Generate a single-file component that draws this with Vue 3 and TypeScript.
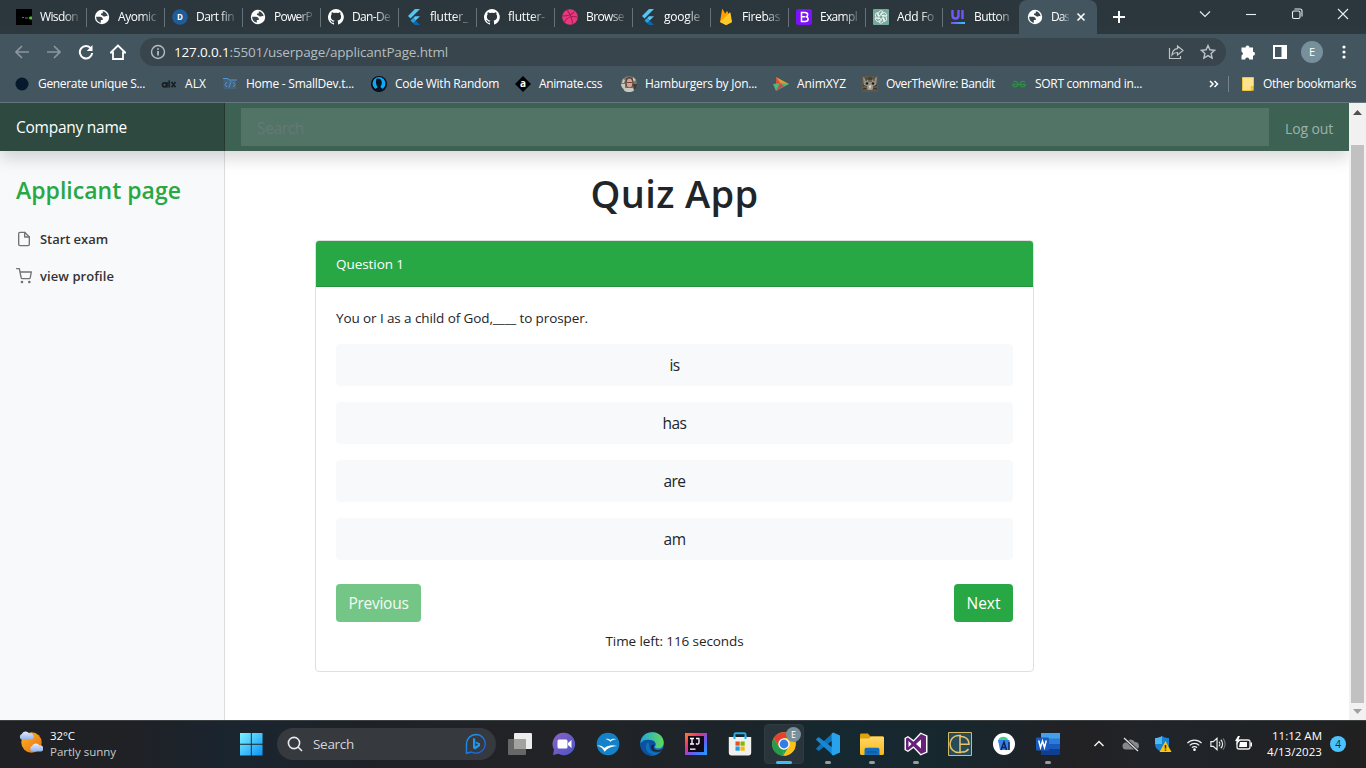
<script setup lang="ts">
interface Tab { icon: string; title: string; cell: number; w: number }
interface Bookmark { icon: string; title: string; cell: number; w: number }
interface TaskApp { icon: string; running?: boolean; active?: boolean }

const tabs: Tab[] = [
  { icon: 'term', title: 'Wisdon', cell: 78, w: 38 },
  { icon: 'globe', title: 'Ayomic', cell: 78, w: 38 },
  { icon: 'dart', title: 'Dart fin', cell: 78, w: 38 },
  { icon: 'globe', title: 'PowerP', cell: 78, w: 38 },
  { icon: 'github', title: 'Dan-De', cell: 78, w: 38 },
  { icon: 'flutter', title: 'flutter_', cell: 78, w: 38 },
  { icon: 'github', title: 'flutter-', cell: 78, w: 37 },
  { icon: 'dribbble', title: 'Browse', cell: 78, w: 38 },
  { icon: 'flutter', title: 'google', cell: 78, w: 36 },
  { icon: 'firebase', title: 'Firebas', cell: 78, w: 38 },
  { icon: 'bootstrap', title: 'Exampl', cell: 77, w: 37 },
  { icon: 'gpt', title: 'Add Fo', cell: 77, w: 37 },
  { icon: 'ui', title: 'Button', cell: 77, w: 35 },
]

const bookmarks: Bookmark[] = [
  { icon: 'dot', title: 'Generate unique S...', cell: 147, w: 107 },
  { icon: 'alx', title: 'ALX', cell: 61, w: 21 },
  { icon: 'smalldev', title: 'Home - SmallDev.t...', cell: 149, w: 108 },
  { icon: 'random', title: 'Code With Random', cell: 144, w: 104 },
  { icon: 'animate', title: 'Animate.css', cell: 106, w: 63 },
  { icon: 'person', title: 'Hamburgers by Jon...', cell: 152, w: 112 },
  { icon: 'xyz', title: 'AnimXYZ', cell: 89, w: 49 },
  { icon: 'cat', title: 'OverTheWire: Bandit', cell: 149, w: 109 },
  { icon: 'gfg', title: 'SORT command in...', cell: 140, w: 107 },
]

const options: { text: string; w: number }[] = [
  { text: 'is', w: 10 },
  { text: 'has', w: 24 },
  { text: 'are', w: 22 },
  { text: 'am', w: 22 },
]

const apps: TaskApp[] = [
  { icon: 'taskview' }, { icon: 'meet' }, { icon: 'birds' }, { icon: 'edge' },
  { icon: 'intellij' }, { icon: 'store' }, { icon: 'chrome', active: true },
  { icon: 'vscode', running: true }, { icon: 'folder', running: true },
  { icon: 'vs', running: true }, { icon: 'ce' }, { icon: 'studio' },
  { icon: 'word', running: true },
]

// Spreads a label's letters so that it takes the given width in pixels.
const vFit = {
  mounted(el: HTMLElement, binding: { value: number }) {
    el.style.letterSpacing = '0px'
    const count = (el.textContent ?? '').length
    const natural = el.getBoundingClientRect().width
    if (count > 0) el.style.letterSpacing = `${((binding.value - natural) / count).toFixed(3)}px`
  },
}
</script>

<template>
  <div class="screen">
    <svg class="sprite" width="0" height="0" aria-hidden="true">
      <defs>
        <linearGradient id="gWin" x1="0" y1="0" x2="1" y2="1"><stop offset="0" stop-color="#7df3ff" /><stop offset="1" stop-color="#0a93f5" /></linearGradient>
        <linearGradient id="gSun" x1="0" y1="0" x2="1" y2="1"><stop offset="0" stop-color="#fbb829" /><stop offset="1" stop-color="#ea6a10" /></linearGradient>
        <linearGradient id="gCloud" x1="0" y1="0" x2="0" y2="1"><stop offset="0" stop-color="#e4edfd" /><stop offset="1" stop-color="#93b3ee" /></linearGradient>
        <linearGradient id="gUi" x1="0" y1="0" x2="1" y2="0"><stop offset="0" stop-color="#7b4dff" /><stop offset="1" stop-color="#2fc8f5" /></linearGradient>
        <linearGradient id="gMeet" x1="0" y1="0" x2="1" y2="1"><stop offset="0" stop-color="#8b62c4" /><stop offset="1" stop-color="#4b55c8" /></linearGradient>
        <linearGradient id="gEdge" x1="0" y1="0" x2="1" y2="0"><stop offset="0" stop-color="#1fa5e0" /><stop offset="1" stop-color="#63d957" /></linearGradient>
        <linearGradient id="gIj" x1="0" y1="0" x2="1" y2="1"><stop offset="0" stop-color="#fd8224" /><stop offset=".35" stop-color="#ee2f75" /><stop offset=".6" stop-color="#6a5af0" /><stop offset="1" stop-color="#18a0ff" /></linearGradient>
        <linearGradient id="gFold" x1="0" y1="0" x2="0" y2="1"><stop offset="0" stop-color="#ffd768" /><stop offset="1" stop-color="#f9b916" /></linearGradient>
        <linearGradient id="gBing" x1="0" y1="0" x2="1" y2="1"><stop offset="0" stop-color="#1b9df0" /><stop offset="1" stop-color="#2157d6" /></linearGradient>
      </defs>
      <symbol id="term" viewBox="0 0 16 16"><path fill="#000" d="M0 0h16v16H0z" /><path d="M6 8.500h2M9 9h3" stroke="#6a6f6a" /><path d="M12.500 9l1.500-1.500h2v3h-2z" fill="#4cc32a" /></symbol>
      <symbol id="globe" viewBox="0 0 16 16"><circle cx="8" cy="8" r="7.200" fill="#fff" /><path d="M2.200 7.800H6c1.600 0 2.800 1 2.800 2.500v.6H6.800v2.800C4 13.200 2 10.800 2.200 7.800zM8.800 2.300c2.500.4 4.600 2.500 4.900 5.200-.7-.6-1.400-.6-2.100-.2-.9.500-1.900.3-2.600-.4-.6-.6-1.200-.9-2-.9V4.500h1c.500 0 .8-.3.800-.8z" fill="#39464e" /></symbol>
      <symbol id="dart" viewBox="0 0 16 16"><circle cx="8" cy="8" r="7.800" fill="#1f5c99" /><text x="8" y="11" text-anchor="middle" font-size="8" font-weight="700" fill="#fff">D</text></symbol>
      <symbol id="github" viewBox="0 0 16 16"><path fill="#fff" d="M8 0a8 8 0 0 0-2.500 15.600c.4.100.500-.2.500-.4v-1.500c-2.200.5-2.700-1-2.700-1-.4-.9-.9-1.200-.9-1.200-.7-.5.100-.5.100-.5.800.1 1.200.8 1.200.8.7 1.200 1.900.9 2.300.7.100-.5.300-.9.500-1.100-1.800-.2-3.600-.9-3.600-4 0-.9.300-1.600.8-2.100-.1-.2-.4-1 .1-2.100 0 0 .7-.2 2.200.8a7.600 7.600 0 0 1 4 0c1.500-1 2.200-.8 2.200-.8.4 1.100.2 1.900.1 2.100.5.600.8 1.300.8 2.100 0 3.100-1.900 3.800-3.700 4 .3.200.6.700.6 1.500v2.200c0 .200.100.500.600.4A8 8 0 0 0 8 0z" /></symbol>
      <symbol id="flutter" viewBox="0 0 16 16"><path d="M9 0h5L4.500 9.500 2 7z" fill="#55c5f8" /><path d="M9 7.300h5L9.600 11.600 7.100 9.200z" fill="#55c5f8" /><path d="M4.600 11.600 7.100 9.100 14 16H9z" fill="#0b68ae" /><path d="M4.600 11.600 7.100 9.100l2.500 2.500-2.500 2.500z" fill="#29a4df" /></symbol>
      <symbol id="dribbble" viewBox="0 0 16 16"><circle cx="8" cy="8" r="7.800" fill="#e8397f" /><path d="M5.200 1.200C8 4.500 9.800 9 10.700 14.700M.5 7c5 0 9.500-.8 12-4.500M2.500 13c2-4.500 7-6.500 13-4.700" fill="none" stroke="#a51c50" stroke-width="1.100" /></symbol>
      <symbol id="firebase" viewBox="0 0 16 16"><path d="M2 13 4 .8c.1-.5.700-.6 1-.1l2.200 4L8.500 2.500c.2-.5.800-.5 1 0L14 13l-5.500 3z" fill="#ffa000" /><path d="m2 13 9.500-9.300c.4-.3.900-.1 1 .3L14 13l-5.300 2.800a2 2 0 0 1-1.500 0z" fill="#ffca28" /></symbol>
      <symbol id="bootstrap" viewBox="0 0 16 16"><rect width="16" height="16" rx="2.500" fill="#7b12f8" /><path d="M5.500 3.500v9h3.600c2 0 3-1 3-2.500 0-1.200-.8-2-1.900-2.200 1-.3 1.500-1 1.500-2 0-1.400-1-2.300-2.800-2.300zM5.500 7.800h4" fill="none" stroke="#fff" stroke-width="1.500" /></symbol>
      <symbol id="gpt" viewBox="0 0 16 16"><rect width="16" height="16" rx="1" fill="#75a99c" /><g fill="none" stroke="#fff" stroke-width=".8"><path id="petal" d="M8 5.700 5.500 7.200V4.300a2.600 2.600 0 0 1 4.700-1.400L7.500 4.500" /><use href="#petal" transform="rotate(60 8 8)" /><use href="#petal" transform="rotate(120 8 8)" /><use href="#petal" transform="rotate(180 8 8)" /><use href="#petal" transform="rotate(240 8 8)" /><use href="#petal" transform="rotate(300 8 8)" /></g></symbol>
      <symbol id="ui" viewBox="0 0 16 16"><path d="M2.500 1v5.500c0 4 6 4 6 0V1M12.500 1v9" fill="none" stroke="#7357f5" stroke-width="2.400" /><path d="M1 13h14v2H1z" fill="url(#gUi)" /></symbol>
      <symbol id="dot" viewBox="0 0 16 16"><circle cx="8" cy="8" r="6.500" fill="#06192d" /></symbol>
      <symbol id="alx" viewBox="0 0 16 16"><g fill="none" stroke="#182022" stroke-width="1.700"><circle cx="3.500" cy="8.800" r="2" /><path d="M6 6v5.500M8.200 4.500v7M10.500 6l4 5.300M14.500 6l-4 5.300" /></g></symbol>
      <symbol id="smalldev" viewBox="0 0 16 16"><path d="M1.500 2.500h5l1 1.500h6.500v9H1.500z" fill="#496a88" opacity=".6" /><path d="M1 2.500h5l1 1.500h8M5 6 3 8.500 5 11M11 6l2 2.500-2 2.500M9 5.500l-2 6" fill="none" stroke="#5393d5" /></symbol>
      <symbol id="random" viewBox="0 0 16 16"><circle cx="8" cy="8" r="8" fill="#050b12" /><circle cx="8" cy="7.500" r="6.500" fill="#0cabf7" /><path d="M5.500 2.800C8 1.600 11 3 10.800 6.800c0 2-.8 3-1.500 4l3 3c-3 2-6.500 2-9 0l3.500-2.500C5 9 4.300 6 5.500 2.800z" fill="#07121e" /></symbol>
      <symbol id="animate" viewBox="0 0 16 16"><path d="m8 0 8 8-8 8-8-8z" fill="#000" /><text x="8" y="11.300" text-anchor="middle" font-size="10" font-weight="700" fill="#fff">a</text></symbol>
      <symbol id="person" viewBox="0 0 16 16"><circle cx="8" cy="8" r="8" fill="#74766e" /><path d="M0 8h4v6C1 12 0 10 0 8zM12 1l3 3-3 2zM2 3l2 1-1 3H1z" fill="#c4c8bd" /><path d="M12 8h4c0 3-1 5-3 6z" fill="#3c3d38" /><ellipse cx="8.500" cy="6.500" rx="4" ry="5.500" fill="#543830" /><ellipse cx="8.500" cy="7" rx="2.900" ry="4.500" fill="#d2a48f" /><path d="M4 12h8l1 2.500c-3 2-7 2-10 0z" fill="#c9c7c1" /><path d="M5.500 6.500h6" stroke="#70493d" /></symbol>
      <symbol id="xyz" viewBox="0 0 16 16"><path d="m3 1 13 7-8 2z" fill="#e29a33" /><path d="M3 1v10l5-3z" fill="#d6503f" /><path d="m0 8 8-1 8 1L3 15z" fill="#4eb779" /><path d="m3 15 4-8 4 3z" fill="#c04f54" /></symbol>
      <symbol id="cat" viewBox="0 0 16 16"><path d="M0 0h16v16H0z" fill="#5b574b" /><path d="m1 1 4 3h5l5-3-1 8-4 5H6L2 10z" fill="#969180" /><path d="M4 2v3M7 1v5M9 1v5M12 2v3M1 9l4 2M15 9l-4 2M1 13l4-1M15 13l-4-1" stroke="#24231e" stroke-width=".8" /><circle cx="5" cy="7.500" r="1.300" fill="#1b1d16" /><circle cx="11" cy="7.500" r="1.300" fill="#1b1d16" /><path d="m6.500 9.500 1.500 4 1.500-4z" fill="#e0d7c8" /></symbol>
      <symbol id="gfg" viewBox="0 0 16 16"><path d="M2 6c2-1.500 5-.3 5 2.400 0 3.200-5.300 3-5.300 0H14.300c0 3-5.300 3.200-5.300 0C9 5.700 12 4.500 14 6" fill="none" stroke="#2f8d46" stroke-width="1.300" /></symbol>
      <symbol id="taskview" viewBox="0 0 24 24"><rect x="6" y="1" width="18" height="16" rx="1" fill="#ececec" /><rect y="7" width="18" height="16" rx="1" fill="#6c6c6b" opacity=".95" /><path d="M6 7h12v10H6z" fill="#a2a2a1" /></symbol>
      <symbol id="meet" viewBox="0 0 24 24"><path d="M12 .8a11.200 11.200 0 1 1-5.500 21L1 23l1-5.500A11.200 11.200 0 0 1 12 .8z" fill="url(#gMeet)" /><rect x="5.500" y="7.500" width="10" height="9" rx="1.500" fill="#fff" /><path d="m16 11 3.500-3v8L16 13z" fill="#fff" /></symbol>
      <symbol id="birds" viewBox="0 0 24 24"><circle cx="12" cy="12" r="11.300" fill="#1382c9" /><path d="M9.500 7c2-.6 3.500-.2 4.800 1 1.700-1.300 3.700-1.400 5.700-.8-2.200.2-4 1-5.700 2.600C13 8.200 11.500 7.500 9.500 7zM1 13.800c3.300-.6 5.600.3 7.300 2.200 3.700-2.800 8.200-3.500 12.700-2-5 .2-9.500 2-12.500 5.800C7 16.500 5 14.500 1 13.800z" fill="#fff" /></symbol>
      <symbol id="edge" viewBox="0 0 24 24"><circle cx="12" cy="12" r="11.700" fill="#1170bd" /><path d="M.4 11C1 4 6 .2 12.500.3 20 .5 24 6 23.700 11c-.2 4-3 5.500-6 5.300-3-.1-3-1.500-2.200-2.800 1-2-1-5.500-5-5.500C5.500 8 1 11 .4 11z" fill="url(#gEdge)" /><path d="M8 10c-5 5-1 13 7 13.200C10 25 1 22 .4 12 2 8 6 7 10 8c3 .3 5.500 2 5.500 4.500L14 15c-1 2 2 4 7 2.500L22 18c-3 4-10 3-12-1-1.200-2.500-.5-5-2-7z" fill="#0c51a1" /><path d="M14 12.500c1 1-1 2-.5 3.500 1 2.500 5 3 9 1l-.8 1.500c-3.500 2.500-9.700 1.500-10.700-2.500-.4-1.800 1-3.500 3-3.500z" fill="#202631" /></symbol>
      <symbol id="intellij" viewBox="0 0 24 24"><path d="M1 1h22v22H1z" fill="url(#gIj)" /><path d="M4 4h16v16H4z" fill="#130817" /><path d="M6 6.500h4M6 12h4M8 6.500V12M12 6.500h3.500M15 6.500v4c0 2-2 2-3 1" fill="none" stroke="#fff" stroke-width="1.300" /><path d="M6 16.500h5.500v1.300H6z" fill="#fff" /></symbol>
      <symbol id="store" viewBox="0 0 24 24"><path d="M6.500 7V2.500c0-.8.500-1.200 1.200-1.200h8.600c.7 0 1.200.4 1.200 1.200V7" fill="none" stroke="#25a9e8" stroke-width="2" /><path d="M.8 5h22.400v15.500A3 3 0 0 1 20 23.500H4a3 3 0 0 1-3.200-3z" fill="#f0f0ef" /><path d="M6.500 4v3M17.500 4v3" stroke="#25a9e8" stroke-width="2" /><path d="M7.500 9.500h4.200v4.200H7.500z" fill="#e94f20" /><path d="M12.500 9.500h4.200v4.200h-4.200z" fill="#7cb908" /><path d="M7.500 14.500h4.200v4.200H7.500z" fill="#1c9ee8" /><path d="M12.500 14.500h4.200v4.200h-4.200z" fill="#fcb805" /></symbol>
      <symbol id="chrome" viewBox="0 0 24 24"><circle cx="12" cy="12" r="11.800" fill="#fbc116" /><path d="M1.800 6A11.800 11.800 0 0 1 22.200 6H12l-5 9z" fill="#e8402f" /><path d="M1.800 6 7 15l5 3-1 6A11.800 11.800 0 0 1 1.800 6z" fill="#269b4d" /><path d="m11 23.800 6.200-9.800L12 12l-5 3 5 3z" fill="#269b4d" /><path d="M12 23.800 17.200 15 19 9l4 0A11.800 11.800 0 0 1 12 23.800z" fill="#fbc116" /><circle cx="12" cy="12" r="5.700" fill="#fff" /><circle cx="12" cy="12" r="4.400" fill="#347de9" /></symbol>
      <symbol id="vscode" viewBox="0 0 24 24"><path d="m17.300.4-14 12.800L.5 16a1 1 0 0 0 0 1.200L2 18.500c.4.300.9.300 1.300 0L19 6.500z" fill="#0d73ba" /><path d="M.5 6.800 2 5.500c.4-.3.900-.3 1.300 0L19 17.500l-1.700 6.100-14-12.800L.5 8.200a1 1 0 0 1 0-1.400z" fill="#1787d4" /><path d="M17.300.4 24 3.500v17l-6.700 3.100-1.600-1V1.400z" fill="#27a3ed" /></symbol>
      <symbol id="folder" viewBox="0 0 24 24"><path d="M0 3c0-1 .5-1.500 1.500-1.500H8l2.500 3H23l1 1V21H0z" fill="#dfa008" /><path d="M0 6.500h9l2-2h12l1 1V22l-1 1H1l-1-1z" fill="url(#gFold)" /><path d="M4.500 23v-5c0-1.500.8-2.200 2-2.200h11c1.200 0 2 .7 2 2.200v5z" fill="#0f6fbe" /><path d="M7 20h10" stroke="#1659a0" stroke-width="1.500" /></symbol>
      <symbol id="vs" viewBox="0 0 24 24"><path d="m16.500.5 7 3v17l-7 3-7-7.500-5.500 4L.5 18V6L4 4l5.500 4z" fill="#fff" /><path d="m17 2 5 2.300v15.400L17 22 9.500 14.200 4 18.500l-2-1v-11l2-1 5.500 4.300z" fill="#68217a" /><path d="M4.500 9v6l3-3zM17 7.500v9L12 12z" fill="#fff" /></symbol>
      <symbol id="ce" viewBox="0 0 24 24"><path d="M.5.5h23v23H.5z" fill="#284c57" stroke="#d6b968" /><path d="M13 3.500h-2.500a8.500 8.500 0 0 0 0 17H13M12 3.500v17M12 4.500c5-.5 9 2.500 9 7.800h-9M13 20c3.500.3 6-.8 7.500-3" fill="none" stroke="#e8c36c" stroke-width="1.500" /></symbol>
      <symbol id="studio" viewBox="0 0 24 24"><circle cx="12" cy="12" r="11" fill="#fff" /><path d="M6.500 7.500c1-3.500 8-4 9.500 0l1.500 3h-11z" fill="#3bd287" /><path d="M6 8h11.500v10H8z" fill="#3b7fef" /><path d="m9 18 3-8 2.500 8M10 15.500h3.500M17 10v8" fill="none" stroke="#0a2346" stroke-width="1.400" /></symbol>
      <symbol id="word" viewBox="0 0 24 24"><path d="M5 1h19v6H5z" fill="#43a0ec" /><path d="M5 6.500h19V12H5z" fill="#2c7bd4" /><path d="M5 12h19v5.500H5z" fill="#195abe" /><path d="M5 17.500h19V22l-1 1H5z" fill="#103f92" /><rect y="5.500" width="13" height="13" rx="1" fill="#185abd" /><path d="m2.700 8.500 1.800 7 2-6.500 2 6.500 1.800-7" fill="none" stroke="#fff" stroke-width="1.500" /></symbol>
    </svg>

    <header class="browser">
      <div class="tabstrip">
        <div v-for="(tab, i) in tabs" :key="i" class="tab" :class="{ last: i === tabs.length - 1 }" :style="{ width: tab.cell + 'px' }">
          <svg class="fav"><use :href="'#' + tab.icon" /></svg>
          <div class="fade"><span v-fit="tab.w" class="lbl">{{ tab.title }}</span></div>
        </div>
        <div class="tab current">
          <svg class="fav"><use href="#globe" /></svg>
          <div class="fade short"><span v-fit="18" class="lbl">Das</span></div>
          <svg class="close" viewBox="0 0 10 10"><path d="m1.500 1.500 7 7m0-7-7 7" /></svg>
        </div>
        <svg class="plus" viewBox="0 0 14 14"><path d="M7 1v12M1 7h12" /></svg>
        <div class="winctl">
          <svg viewBox="0 0 14 14"><path d="m2 4.500 5 5 5-5" /></svg>
          <svg viewBox="0 0 14 14"><path d="M2 7.500h10" /></svg>
          <svg viewBox="0 0 14 14"><rect x="2.500" y="4" width="7.500" height="7.500" rx="1.500" /><path d="M4.500 2H10a2 2 0 0 1 2 2v5.500" /></svg>
          <svg viewBox="0 0 14 14"><path d="m2 2 10 10m0-10L2 12" /></svg>
        </div>
      </div>

      <div class="toolbar">
        <svg class="nav dim" viewBox="0 0 16 16"><path d="M15 8H2m6-6L2 8l6 6" /></svg>
        <svg class="nav dim" viewBox="0 0 16 16"><path d="M1 8h13M8 2l6 6-6 6" /></svg>
        <svg class="nav" viewBox="0 0 16 16"><path d="M13 4.500A6.200 6.200 0 1 0 14.200 9" stroke-width="2" /><path d="M14.500 1v6H8.700z" fill="#fff" stroke="none" /></svg>
        <svg class="nav" viewBox="0 0 16 16"><path d="M8 1.500.8 8.500H3V15h10V8.500h2.200z" stroke-width="1.800" /></svg>
        <div class="omnibox">
          <svg class="info" viewBox="0 0 16 16"><circle cx="8" cy="8" r="6.500" /><path d="M8 7v4.500M8 4.200v1.500" stroke-width="1.800" /></svg>
          <span v-fit="274" class="url"><b>127.0.0.1</b>:5501/userpage/applicantPage.html</span>
          <span class="grow"></span>
          <svg class="oicon" viewBox="0 0 16 16"><path d="M1.500 4v10.500h11V12M9.500 2l5.500 4.500-5.500 4.500V8.500C7 8.500 5.500 9 4 11c.3-3 2-6 5.500-6.300z" /></svg>
          <svg class="oicon" viewBox="0 0 16 16"><path d="m8 1.500 1.900 4.300 4.700.5-3.500 3.100 1 4.600L8 11.600 3.900 14l1-4.600-3.500-3.100 4.700-.5z" stroke-width="1.400" /></svg>
        </div>
        <div class="tools">
          <svg class="puzzle" viewBox="0 0 16 16"><path d="M1.500 3.500h4a2 2 0 1 1 4 0H13v4.300a2 2 0 1 1 0 4v3.700H9.200a2 2 0 0 0-4 0H1.500v-4a2 2 0 0 0 0-3.800z" fill="#fff" /></svg>
          <svg class="panel" viewBox="0 0 14 14"><path d="M1 1h12v12H1z" fill="none" stroke="#fff" stroke-width="2" /><path d="M8.500 1H13v12H8.500z" fill="#fff" /></svg>
          <span class="avatar">E</span>
          <svg class="dots" viewBox="0 0 4 16"><circle cx="2" cy="3" r="1.600" /><circle cx="2" cy="8" r="1.600" /><circle cx="2" cy="13" r="1.600" /></svg>
        </div>
      </div>

      <div class="bookmarks">
        <div v-for="b in bookmarks" :key="b.title" class="bm" :style="{ width: b.cell + 'px' }">
          <svg class="fav"><use :href="'#' + b.icon" /></svg><span v-fit="b.w" class="lbl">{{ b.title }}</span>
        </div>
        <div class="other">
          <svg class="more" viewBox="0 0 10 10"><path d="m1 2 3 3-3 3m4.500-6 3 3-3 3" /></svg>
          <i class="rule"></i>
          <svg class="note" viewBox="0 0 12 14"><path d="M.5.500h11v9h-2v4h-9z" fill="#ffe38c" stroke="#ecc63f" /><path d="M9 10h2.500v3.500H9z" fill="#f5cf4b" stroke="#dcb02c" stroke-width=".5" /></svg>
          <span v-fit="93" class="lbl">Other bookmarks</span>
        </div>
      </div>
    </header>

    <div class="viewport">
      <div class="page">
        <nav class="navbar">
          <div class="brand"><span v-fit="111">Company name</span></div>
          <div class="search"><span v-fit="47">Search</span></div>
          <div class="logout"><span v-fit="48">Log out</span></div>
        </nav>
        <div class="columns">
          <aside class="sidebar">
            <h2><span v-fit="165">Applicant page</span></h2>
            <a class="link">
              <svg viewBox="0 0 24 24"><path d="M13 2H6a2 2 0 0 0-2 2v16a2 2 0 0 0 2 2h12a2 2 0 0 0 2-2V9z" /><path d="M13 2v7h7" /></svg>
              <span v-fit="68">Start exam</span>
            </a>
            <a class="link">
              <svg viewBox="0 0 24 24"><circle cx="9" cy="21" r="1" /><circle cx="20" cy="21" r="1" /><path d="M1 1h4l2.700 13.400a2 2 0 0 0 2 1.600h9.700a2 2 0 0 0 2-1.600L23 6H6" /></svg>
              <span v-fit="74">view profile</span>
            </a>
          </aside>
          <main class="content">
            <h1><span v-fit="168">Quiz App</span></h1>
            <section class="card">
              <div class="card-head"><span v-fit="68">Question 1</span></div>
              <div class="card-body">
                <p class="question"><span v-fit="252">You or I as a child of God,____ to prosper.</span></p>
                <div v-for="o in options" :key="o.text" class="option"><span v-fit="o.w">{{ o.text }}</span></div>
                <div class="actions">
                  <button class="btn off"><span v-fit="60">Previous</span></button>
                  <button class="btn"><span v-fit="34">Next</span></button>
                </div>
                <p class="timer"><span v-fit="138">Time left: 116 seconds</span></p>
              </div>
            </section>
          </main>
        </div>
      </div>
      <div class="scrollbar">
        <svg viewBox="0 0 9 5"><path d="M0 5 4.500 0 9 5z" fill="#505050" /></svg>
        <div class="thumb"></div>
        <svg viewBox="0 0 9 5"><path d="M0 0h9L4.500 5z" fill="#a0a0a0" /></svg>
      </div>
    </div>

    <footer class="taskbar">
      <div class="weather">
        <svg viewBox="0 0 24 24"><circle cx="12.500" cy="12.500" r="10.200" fill="url(#gSun)" /><path d="M2.500 9.500a3 3 0 0 1 .3-5.500 4 4 0 0 1 7.200-.5 3 3 0 0 1 2.500 6z" fill="url(#gCloud)" /><path d="M13 21.500a3 3 0 0 1 0-5.500 4.200 4.200 0 0 1 7.500-.5 3 3 0 0 1 1.500 6z" fill="url(#gCloud)" /></svg>
        <div class="wtext"><span v-fit="25">32°C</span><span v-fit="66" class="muted">Partly sunny</span></div>
      </div>
      <svg class="start" viewBox="0 0 24 24"><path d="M0 0h11.300v11.300H0zM12.300 0H23.500v11.300H12.300zM0 12.300h11.300v11.200H0zM12.300 12.300h11.200v11.200H12.300z" fill="url(#gWin)" /></svg>
      <div class="tsearch">
        <svg class="lens" viewBox="0 0 16 16"><circle cx="7" cy="7" r="5.600" /><path d="m11 11 4 4" /></svg>
        <span v-fit="41">Search</span>
        <svg class="bing" viewBox="0 0 22 22"><path d="M11 1.500A9.300 9.300 0 1 1 6.500 19L1.500 20.300V11A9.500 9.500 0 0 1 11 1.500z" fill="none" stroke="url(#gBing)" stroke-width="1.400" /><path d="m8 5 2.200.8v7.400l3-1.500-1.800-.9-1-2.300 4.600 1.700v2.800L10.200 16.500 8 15.200z" fill="#2496ea" /></svg>
      </div>
      <div class="apps">
        <div v-for="app in apps" :key="app.icon" class="app" :class="{ active: app.active }">
          <svg class="appicon"><use :href="'#' + app.icon" /></svg>
          <b v-if="app.active" class="profile">E</b>
          <i v-if="app.running || app.active" class="mark"></i>
        </div>
      </div>
      <div class="tray">
        <svg viewBox="0 0 18 18"><path d="m4.500 11 4.500-4.500 4.500 4.500" fill="none" stroke="#eee" stroke-width="1.500" /></svg>
        <svg viewBox="0 0 18 18"><path d="M4 14.500a3.500 3.500 0 0 1 0-7A5 5 0 0 1 13 7a3.800 3.800 0 0 1 1 7.500z" fill="#85888a" /><path d="m2 3 14 13" stroke="#20252a" stroke-width="3" /><path d="m2 3 14 13" stroke="#e0e0e0" stroke-width="1.300" /></svg>
        <svg viewBox="0 0 18 18"><path d="M8 1c2 1.500 4.500 2 7 2v6c0 4-3 6.500-7 8-4-1.500-7-4-7-8V3c2.500 0 5-.5 7-2z" fill="#1683d5" /><path d="M8 1v8H1V3c2.500 0 5-.5 7-2z" fill="#50b7f0" /><path d="m11.500 6 6 11h-12z" fill="#ffc20d" /><path d="M11.500 10v3.500m0 1v1.300" stroke="#302b11" stroke-width="1.500" /></svg>
        <svg class="wifi" viewBox="0 0 18 18"><g fill="none" stroke="#f1f1f1" stroke-width="1.300"><path d="M1.500 8a10.500 10.500 0 0 1 15 0M4 10.500a7 7 0 0 1 10 0M6.300 12.800a3.800 3.800 0 0 1 5.400 0" /></g><circle cx="9" cy="15" r="1.400" fill="#fff" /></svg>
        <svg class="sound" viewBox="0 0 18 18"><g fill="none" stroke="#f1f1f1" stroke-width="1.200"><path d="M2 6.500h2.500L8.500 3v12l-4-3.500H2zM10.500 6.500c1.300 1.300 1.300 3.700 0 5M12.500 4.500c2.500 2.500 2.500 6.500 0 9" /><path d="M14.800 3c3 3.500 3 8.500 0 12" stroke="#73777a" /></g></svg>
        <svg class="batt" viewBox="0 0 18 18"><rect x="3" y="5" width="13" height="9" rx="2" fill="none" stroke="#eee" stroke-width="1.300" /><path d="M6 7h7v5H5zM16.500 7.500h1.500v4h-1.500z" fill="#fff" /><path d="M4 1 1 6h2.500L2 10l4.500-5H4.200L6 1z" fill="#fff" /></svg>
        <div class="clock"><span v-fit="50">11:12 AM</span><span v-fit="55">4/13/2023</span></div>
        <span class="count">4</span>
      </div>
    </footer>
  </div>
</template>

<style>
body { margin: 0; overflow: hidden; }
</style>

<style scoped>
* { box-sizing: border-box; }
.screen { width: 1366px; height: 768px; display: flex; flex-direction: column; overflow: hidden; font-family: "Open Sans", "Noto Sans", sans-serif; background: #fff; }
.sprite { position: absolute; overflow: visible; }
.sprite symbol { overflow: visible; }
span { white-space: nowrap; }
svg { flex: none; display: block; }
.browser { height: 103px; flex: none; background: #43555f; border-bottom: 1px solid #65777d; color: #fff; }
.tabstrip { height: 34px; background: linear-gradient(#2b373d 70%, #2d383f); display: flex; padding-left: 8px; }
.tab { width: 78px; flex: none; display: flex; align-items: center; gap: 8px; padding-left: 8px; position: relative; }
.tab::after { content: ""; position: absolute; right: -1px; top: 8px; width: 1px; height: 19px; background: #667278; }
.tab.last::after, .tab.current::after { display: none; }
.fav { width: 16px; height: 16px; }
.fade { width: 39px; display: flex; -webkit-mask-image: linear-gradient(90deg, #000 60%, rgba(0, 0, 0, .15)); mask-image: linear-gradient(90deg, #000 60%, rgba(0, 0, 0, .15)); }
.fade.short { width: 18px; }
.lbl { font-size: 12px; line-height: 18px; }
.current { background: #43555f; border-radius: 8px 8px 0 0; }
.current .close { width: 10px; height: 10px; margin-left: -1px; }
.close path { stroke: #fff; stroke-width: 1.6; }
.plus { width: 14px; height: 14px; margin: 10px 0 0 15px; }
.plus path { stroke: #fff; stroke-width: 2; }
.winctl { margin-left: auto; display: flex; gap: 32px; padding: 7px 16px 0 0; }
.winctl svg { width: 14px; height: 14px; fill: none; stroke: #e9edef; stroke-width: 1.1; }
.toolbar { height: 36px; display: flex; align-items: center; padding-left: 14px; }
.nav { width: 16px; height: 16px; margin-right: 16px; fill: none; stroke: #fff; stroke-width: 1.7; }
.nav.dim { stroke: #8b979d; }
.omnibox { width: 1086px; height: 28px; margin-left: -2px; border-radius: 14px; background: #38454c; display: flex; align-items: center; padding: 0 10px; color: #b4bdc1; }
.info { width: 16px; height: 16px; margin-right: 8px; fill: none; stroke: #b5bdc1; stroke-width: 1.4; }
.url { font-size: 13.5px; line-height: 20px; }
.url b { color: #fff; font-weight: 400; }
.grow { flex: 1; }
.oicon { width: 16px; height: 16px; margin-left: 16px; fill: none; stroke: #bcc4c8; stroke-width: 1.2; }
.tools { display: flex; align-items: center; flex: 1; padding-left: 14px; }
.puzzle { width: 16px; height: 16px; }
.panel { width: 14px; height: 14px; margin-left: 17px; }
.avatar { width: 22px; height: 22px; border-radius: 50%; background: #78909c; margin-left: 14px; font-size: 11px; line-height: 22px; text-align: center; }
.dots { width: 4px; height: 16px; margin-left: 19px; fill: #fff; }
.bookmarks { height: 32px; display: flex; padding: 0 10px 4px 14px; align-items: center; }
.bm { display: flex; align-items: center; gap: 8px; flex: none; }
.other { margin-left: auto; display: flex; align-items: center; }
.more { width: 10px; height: 10px; fill: none; stroke: #fff; stroke-width: 1.5; }
.rule { width: 1px; height: 16px; margin: 0 13px 0 9px; background: #72818a; }
.note { width: 12px; height: 14px; margin-right: 9px; }
.viewport { flex: none; height: 617px; display: flex; }
.page { width: 1349px; display: flex; flex-direction: column; }
.navbar { height: 48px; flex: none; display: flex; align-items: center; background: #3d6254; box-shadow: 0 8px 16px rgba(0, 0, 0, .15); position: relative; z-index: 1; clip-path: inset(0 0 -30px 0); }
.brand { width: 225px; height: 48px; padding-left: 16px; line-height: 48px; background: #2e4a40; color: #fff; font-size: 15.5px; border-right: 1px solid #24382f; }
.search { width: 1028px; height: 38px; margin-left: 16px; padding-left: 16px; line-height: 40px; background: #527466; color: #66777a; font-size: 15.5px; }
.logout { padding: 2px 0 0 16px; color: #9eb1aa; font-size: 14px; font-weight: 500; }
.columns { flex: 1; display: flex; }
.sidebar { width: 225px; padding: 24px 16px; border-right: 1px solid #dcdddf; background: #f8f9fb; }
h2 { margin: 0 0 15px; font-size: 23px; line-height: 30px; font-weight: 600; color: #28a745; }
.link { display: flex; align-items: center; gap: 8px; height: 37px; font-size: 13px; font-weight: 600; color: #333; }
.link svg { width: 16px; height: 16px; fill: none; stroke: #727272; stroke-width: 2; stroke-linecap: round; stroke-linejoin: round; }
.link span { line-height: 18px; }
.content { flex: 1; padding-top: 16px; }
h1 { margin: 0; width: 899px; font-size: 38px; line-height: 53px; height: 54px; text-align: center; font-weight: 600; color: #212529; }
.card { width: 719px; height: 432px; margin: 19px 0 0 90px; border: 1px solid #dfdfdf; border-radius: 4px; background: #fff; color: #212529; overflow: hidden; }
.card-head { height: 46px; padding: 0 20px; line-height: 46px; font-size: 13.5px; color: #fff; background: #28a745; border-bottom: 1px solid #24913d; }
.card-body { padding: 20px; font-size: 13.5px; }
.question { margin: 0 0 15px; line-height: 22px; }
.option { height: 42px; margin-bottom: 16px; border-radius: 4px; background: #f8f9fb; line-height: 42px; text-align: center; font-size: 15.5px; }
.actions { display: flex; justify-content: space-between; padding-top: 8px; }
.btn { height: 38px; border: 0; border-radius: 4px; padding: 0 12.500px; background: #28a745; color: #fff; font: 15.5px/38px "Open Sans", "Noto Sans", sans-serif; }
.btn.off { background: #74c686; color: #f3faf5; }
.timer { margin: 8px 0 0; line-height: 22px; text-align: center; }
.scrollbar { width: 17px; background: #f1f1f1; display: flex; flex-direction: column; align-items: center; padding: 7px 0 6px; }
.scrollbar svg { width: 9px; height: 5px; }
.thumb { width: 13px; height: 558px; margin: 30px 0 6px; background: #c1c1c1; }
.taskbar { height: 48px; flex: none; border-top: 1px solid #3b4042; padding-bottom: 1px; display: flex; align-items: center; background: linear-gradient(90deg, #202124 0, #1f2126 10%, #1a2530 17%, #1e2228 26%, #222326 42%, #1b2429 54%, #152830 61%, #18272e 70%, #222124 79%, #20252a 86%, #202020 100%); color: #fff; }
.weather { width: 221px; display: flex; padding-left: 19px; gap: 7px; align-items: center; margin-right: 19px; }
.weather > svg { width: 24px; height: 24px; margin-top: -4px; }
.wtext { display: flex; flex-direction: column; align-items: flex-start; font-size: 11.5px; line-height: 16px; }
.muted { color: #c8cbcc; }
.start { width: 23px; height: 23px; }
.tsearch { width: 219px; height: 32px; margin-left: 14px; border-radius: 16px; background: #363a3f; display: flex; align-items: center; padding: 0 9px 0 10px; font-size: 13.5px; color: #d3d5d7; }
.lens { width: 16px; height: 16px; margin-right: 10px; fill: none; stroke: #e9eaeb; stroke-width: 1.6; }
.bing { width: 22px; height: 22px; margin-left: auto; }
.apps { display: flex; margin-left: 4px; gap: 4px; }
.app { width: 40px; height: 40px; display: flex; align-items: center; justify-content: center; border-radius: 4px; position: relative; }
.app.active { background: #2a343b; border: 1px solid #303a41; }
.appicon { width: 24px; height: 24px; }
.mark { position: absolute; bottom: 0; left: 17px; width: 6px; height: 3px; border-radius: 2px; background: #989c9e; }
.active .mark { left: 11px; bottom: -1px; width: 16px; background: #48b8f3; }
.profile { position: absolute; right: 2px; top: 2px; width: 15px; height: 15px; border-radius: 50%; background: #78909c; font-size: 9px; font-weight: 400; line-height: 15px; text-align: center; }
.tray { display: flex; align-items: center; margin-left: auto; padding-right: 20px; }
.tray svg { width: 18px; height: 18px; margin-right: 14px; }
.tray .wifi { width: 17px; margin-right: 6px; }
.tray .sound { width: 17px; margin-right: 8px; }
.tray .batt { margin-right: 13px; }
.clock { width: 57px; display: flex; flex-direction: column; align-items: flex-end; font-size: 11.5px; line-height: 16px; }
.count { width: 16px; height: 16px; margin-left: 8px; border-radius: 50%; background: #4cc2ff; color: #10232e; font-size: 10px; line-height: 16px; text-align: center; }
</style>
